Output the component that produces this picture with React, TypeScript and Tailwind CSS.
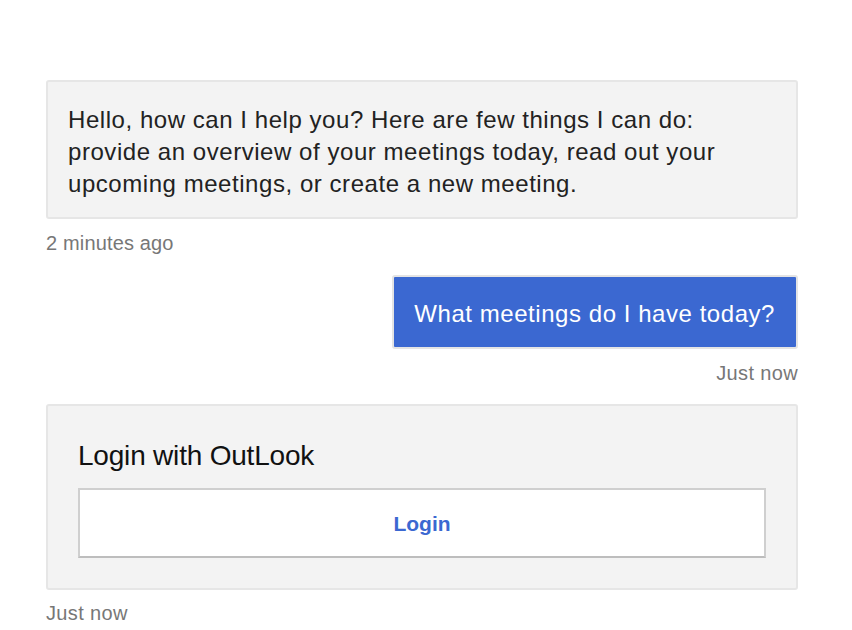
export default function App() {
  const font = { fontFamily: '"Liberation Sans", Arial, sans-serif' };
  return (
    <div className="min-h-screen bg-white" style={font}>
      <div className="ml-[46px] w-[752px] pt-[80px] flex flex-col">
        <div className="bg-[#f3f3f3] border-2 border-[#e6e6e6] rounded-[3px] px-[20px] pt-[22px] pb-[17px] text-[24px] leading-[32px] tracking-[0.55px] text-[#222]">
          Hello, how can I help you? Here are few things I can do: provide an overview of your meetings today, read out your upcoming meetings, or create a new meeting.
        </div>
        <div className="mt-[12px] text-[20px] leading-[24px] tracking-[0.15px] text-[#777]">2 minutes ago</div>

        <div className="mt-[20px] self-end bg-[#3b68d1] border-2 border-[#e4e4e4] rounded-[3px] pl-[20px] pr-[21px] pt-[21px] pb-[17px] text-[24px] leading-[32px] tracking-[0.55px] text-white">
          What meetings do I have today?
        </div>
        <div className="mt-[12px] self-end text-[20px] leading-[24px] tracking-[0.35px] text-[#777]">Just now</div>

        <div className="mt-[19px] bg-[#f3f3f3] border-2 border-[#e6e6e6] rounded-[3px] px-[30px] pt-[32px] pb-[30px]">
          <div className="text-[28px] leading-[36px] tracking-[-0.2px] text-[#111]">Login with OutLook</div>
          <button className="mt-[14px] w-full h-[70px] pt-[2px] bg-white border-2 border-[#cfcfcf] border-b-[#bdbdbd] text-[#3b68d1] font-bold text-[21px]">
            Login
          </button>
        </div>
        <div className="mt-[11px] text-[20px] leading-[24px] tracking-[0.35px] text-[#777]">Just now</div>
      </div>
    </div>
  );
}
